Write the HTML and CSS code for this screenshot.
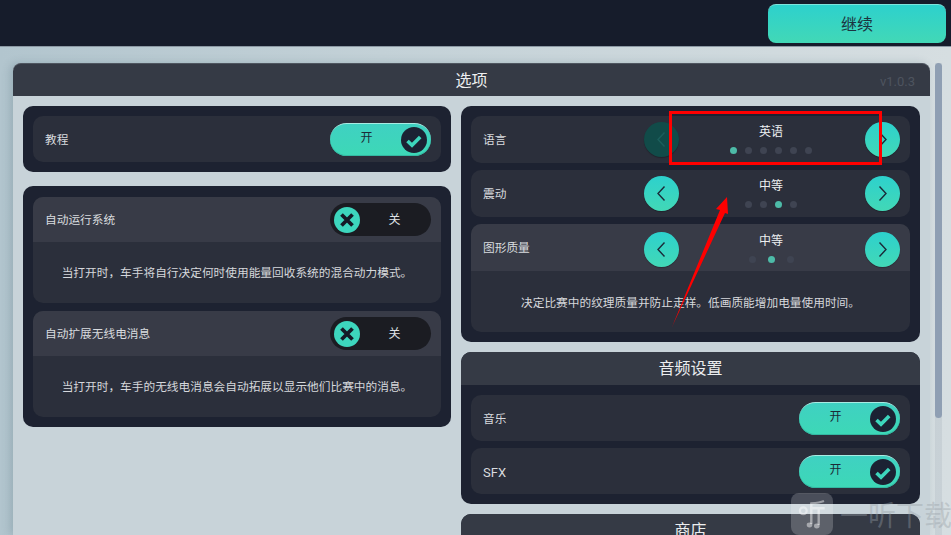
FILE: index.html
```html
<!DOCTYPE html>
<html lang="zh-CN">
<head>
    <meta charset="UTF-8">
    <meta name="viewport" content="width=device-width, initial-scale=1.0">
    <title>选项</title>
    <link rel="stylesheet" href="styles.css">
</head>
<body>
    <!-- Shared icons -->
    <svg class="icon-defs" width="0" height="0">
        <symbol id="icon-check" viewBox="0 0 26 26">
            <path d="M6.500 14l4.500 4.300 8.200-8.300" fill="none" stroke="currentColor" stroke-width="3.600"/>
        </symbol>
        <symbol id="icon-cross" viewBox="0 0 26 26">
            <path d="M7.500 7.500l11 11M18.500 7.500l-11 11" fill="none" stroke="currentColor" stroke-width="3.800"/>
        </symbol>
        <symbol id="icon-left" viewBox="0 0 35 35">
            <path d="M20.500 10.500l-6.500 7 6.500 7" fill="none" stroke="currentColor" stroke-width="1.400"/>
        </symbol>
        <symbol id="icon-right" viewBox="0 0 35 35">
            <path d="M14.500 10.500l6.500 7-6.500 7" fill="none" stroke="currentColor" stroke-width="1.400"/>
        </symbol>
    </svg>

    <!-- Top bar -->
    <div class="topbar">
        <button class="continue-btn">继续</button>
    </div>

    <div class="page">
        <div class="panel">
            <div class="panel-head">
                <span class="panel-title">选项</span>
                <span class="version">v1.0.3</span>
            </div>
            <div class="panel-body">
                <!-- Left column -->
                <div class="column column-left">
                    <div class="card">
                        <div class="row">
                            <span class="row-label">教程</span>
                            <div class="toggle on">
                                <span class="toggle-text">开</span>
                                <span class="knob"><svg><use href="#icon-check"/></svg></span>
                            </div>
                        </div>
                    </div>
                    <div class="card card-stack">
                        <div class="group">
                            <div class="row row-head">
                                <span class="row-label">自动运行系统</span>
                                <div class="toggle off">
                                    <span class="knob"><svg><use href="#icon-cross"/></svg></span>
                                    <span class="toggle-text">关</span>
                                </div>
                            </div>
                            <p class="desc">当打开时，车手将自行决定何时使用能量回收系统的混合动力模式。</p>
                        </div>
                        <div class="group">
                            <div class="row row-head">
                                <span class="row-label">自动扩展无线电消息</span>
                                <div class="toggle off">
                                    <span class="knob"><svg><use href="#icon-cross"/></svg></span>
                                    <span class="toggle-text">关</span>
                                </div>
                            </div>
                            <p class="desc">当打开时，车手的无线电消息会自动拓展以显示他们比赛中的消息。</p>
                        </div>
                    </div>
                </div>

                <!-- Right column -->
                <div class="column column-right">
                    <div class="card card-list">
                        <div class="row row-tall">
                            <span class="row-label">语言</span>
                            <div class="selector">
                                <button class="nav-btn disabled"><svg><use href="#icon-left"/></svg></button>
                                <div class="selector-value">
                                    <span>英语</span>
                                    <div class="dots">
                                        <i class="dot active"></i><i class="dot"></i><i class="dot"></i><i class="dot"></i><i class="dot"></i><i class="dot"></i>
                                    </div>
                                </div>
                                <button class="nav-btn"><svg><use href="#icon-right"/></svg></button>
                            </div>
                        </div>
                        <div class="row row-tall">
                            <span class="row-label">震动</span>
                            <div class="selector">
                                <button class="nav-btn"><svg><use href="#icon-left"/></svg></button>
                                <div class="selector-value">
                                    <span>中等</span>
                                    <div class="dots">
                                        <i class="dot"></i><i class="dot"></i><i class="dot active"></i><i class="dot"></i>
                                    </div>
                                </div>
                                <button class="nav-btn"><svg><use href="#icon-right"/></svg></button>
                            </div>
                        </div>
                        <div class="group">
                            <div class="row row-tall row-head">
                                <span class="row-label">图形质量</span>
                                <div class="selector">
                                    <button class="nav-btn"><svg><use href="#icon-left"/></svg></button>
                                    <div class="selector-value">
                                        <span>中等</span>
                                        <div class="dots dots-wide">
                                            <i class="dot"></i><i class="dot active"></i><i class="dot"></i>
                                        </div>
                                    </div>
                                    <button class="nav-btn"><svg><use href="#icon-right"/></svg></button>
                                </div>
                            </div>
                            <p class="desc desc-short">决定比赛中的纹理质量并防止走样。低画质能增加电量使用时间。</p>
                        </div>
                    </div>

                    <div class="card card-titled">
                        <h2 class="card-title">音频设置</h2>
                        <div class="card-list">
                            <div class="row">
                                <span class="row-label">音乐</span>
                                <div class="toggle on">
                                    <span class="toggle-text">开</span>
                                    <span class="knob"><svg><use href="#icon-check"/></svg></span>
                                </div>
                            </div>
                            <div class="row">
                                <span class="row-label row-label-latin">SFX</span>
                                <div class="toggle on">
                                    <span class="toggle-text">开</span>
                                    <span class="knob"><svg><use href="#icon-check"/></svg></span>
                                </div>
                            </div>
                        </div>
                    </div>

                    <div class="card card-titled">
                        <h2 class="card-title">商店</h2>
                    </div>
                </div>
            </div>
        </div>

        <div class="scrollbar"><div class="scroll-thumb"></div></div>
    </div>

    <!-- Annotations drawn over the screenshot -->
    <div class="mark-box"></div>
    <svg class="mark-arrow" viewBox="0 0 951 535">
        <polygon points="727,197 716,209 720,210 672,327 725,213 728,214" fill="#ff0000"/>
    </svg>

    <!-- Watermark -->
    <div class="watermark">
        <svg class="watermark-icon" viewBox="0 0 42 42">
            <rect width="42" height="42" rx="8" fill="#ffffff" fill-opacity="0.2"/>
            <g fill="none" stroke="#ffffff" stroke-opacity="0.45">
                <circle cx="12.300" cy="17.700" r="3.400" stroke-width="2.200"/>
                <path d="M33 8c-4 1.500-8 2-12.700 2.500V31M19 15.300h14.700M27.700 15.300V32" stroke-width="2.400"/>
            </g>
            <g fill="#ffffff" fill-opacity="0.45">
                <ellipse cx="18.500" cy="32" rx="2.800" ry="2.400"/>
                <ellipse cx="25.800" cy="33" rx="2.800" ry="2.400"/>
            </g>
        </svg>
        <span class="watermark-text">一听下载</span>
    </div>
</body>
</html>
```

FILE: styles.css
```css
/* General body styling */
html, body {
    height: 535px;
}

body {
    margin: 0;
    overflow: hidden;
    position: relative;
    font-family: 'Noto Sans CJK SC', 'Noto Sans', sans-serif;
    color: #e4e6ea;
    background: #c8d3d9;
}

.icon-defs {
    position: absolute;
}

/* Top bar */
.topbar {
    height: 42px;
    background: #161c2b;
    border-bottom: 1px solid #8b98a3;
    display: flex;
    justify-content: flex-end;
    padding: 4px 5px 0 0;
}

.continue-btn {
    width: 178px;
    height: 39px;
    border: none;
    border-top: 1px solid #7de4dc;
    border-radius: 8px;
    background: linear-gradient(180deg, #2dd1cd, #42d8b6);
    color: #1c3440;
    font-family: inherit;
    font-size: 16px;
    padding: 0 0 3px;
}

/* Page area under the bar */
.page {
    height: 488px;
    display: flex;
    padding-top: 16px;
    box-sizing: border-box;
    background: linear-gradient(90deg, #b2c5ce 0, #c3d1d7 40%, #d6dee1 100%);
}

.panel {
    width: 917px;
    margin-left: 13px;
    flex-shrink: 0;
    background: #c8d3d9;
    border-radius: 8px 8px 0 0;
    box-shadow: -3px 0 8px rgba(60, 90, 105, 0.22);
}

.panel-head {
    height: 33px;
    background: #353a45;
    border-top: 1px solid #4f5660;
    box-sizing: border-box;
    border-radius: 8px 8px 0 0;
    display: flex;
    align-items: center;
    justify-content: center;
    position: relative;
    font-size: 16px;
    color: #eceef0;
}

.panel-title {
    padding-bottom: 3px;
}

.version {
    position: absolute;
    right: 15px;
    top: 9px;
    font-family: 'Roboto', sans-serif;
    font-size: 13px;
    line-height: 18px;
    color: #4e545f;
}

.panel-body {
    display: grid;
    grid-template-columns: 428px 459px;
    gap: 10px;
    padding: 10px;
}

.column-left {
    display: flex;
    flex-direction: column;
    gap: 14px;
}

.column-right {
    display: flex;
    flex-direction: column;
    gap: 10px;
}

/* Cards and rows */
.card {
    background: #1d2231;
    border-radius: 10px;
    padding: 10px;
}

.card-stack {
    display: flex;
    flex-direction: column;
    gap: 8px;
    padding-top: 11px;
}

.card-stack .row-head {
    height: 45px;
}

.card-stack .desc {
    height: 61px;
    padding-bottom: 2px;
    box-sizing: border-box;
}

.card-list {
    display: flex;
    flex-direction: column;
    gap: 7px;
}

.card-titled {
    padding: 0 0 10px;
    overflow: hidden;
}

.card-titled .card-list {
    padding: 10px 10px 0;
}

.card-title {
    margin: 0;
    height: 33px;
    line-height: 31px;
    background: #353a45;
    text-align: center;
    font-size: 16px;
    font-weight: 400;
    color: #eceef0;
}

.row {
    height: 46px;
    box-sizing: border-box;
    padding: 0 10px 0 12px;
    display: flex;
    align-items: center;
    justify-content: space-between;
    background: #2b2f3b;
    border-radius: 10px;
}

.row-tall {
    height: 47px;
}

.row-label {
    font-size: 11.700px;
    color: #d9dbdf;
    padding-bottom: 2px;
}

.row-label-latin {
    font-family: 'Roboto', sans-serif;
    font-size: 13px;
    padding: 3px 0 0;
}

.group {
    background: #2b2f3b;
    border-radius: 10px;
    overflow: hidden;
}

.row-head {
    background: #383b47;
    border-radius: 0;
}

.row-head .selector {
    margin-top: 3px;
}

.desc {
    margin: 0;
    height: 60px;
    display: flex;
    align-items: center;
    justify-content: center;
    font-size: 11.700px;
    color: #d6d8dc;
}

.desc-short {
    height: 61px;
}

/* Toggle */
.toggle {
    width: 101px;
    height: 33px;
    box-sizing: border-box;
    border-radius: 17px;
    padding: 0 4px;
    display: flex;
    align-items: center;
}

.toggle.on {
    background: linear-gradient(180deg, #3fd1c2, #3dd8b6);
    border-top: 1px solid #a8ece3;
    box-shadow: inset 0 -1px 0 #33b8a2;
    color: #1c2c38;
}

.toggle.off {
    background: #1b1c22;
    color: #dfe1e5;
}

.toggle-text {
    flex: 1;
    text-align: center;
    font-size: 12px;
    padding-bottom: 3px;
}

.toggle.on .toggle-text {
    padding: 0 2px 6px 0;
}

.toggle.off .toggle-text {
    padding-left: 2px;
}

.knob {
    width: 26px;
    height: 26px;
    border-radius: 50%;
    flex-shrink: 0;
}

.knob svg {
    display: block;
    width: 26px;
    height: 26px;
}

.toggle.on .knob {
    background: #1b2233;
    color: #3dd6bd;
}

.toggle.off .knob {
    background: #3dd6bd;
    color: #151a26;
}

/* Option selector */
.selector {
    width: 256px;
    display: flex;
    align-items: center;
    justify-content: space-between;
}

.nav-btn {
    width: 35px;
    height: 35px;
    padding: 0;
    border: none;
    border-radius: 50%;
    background: linear-gradient(180deg, #2dd1cd, #42d8b6);
    color: #1b2a38;
    box-shadow: 0 1px 1px rgba(0, 0, 0, 0.25);
}

.nav-btn svg {
    display: block;
    width: 35px;
    height: 35px;
}

.nav-btn.disabled {
    background: #114b49;
    color: #1b5f5c;
}

.selector-value {
    display: flex;
    flex-direction: column;
    align-items: center;
    gap: 8px;
    padding-bottom: 4px;
    margin-right: 2px;
    font-size: 12px;
    color: #eceef0;
}

.dots {
    display: flex;
    gap: 8px;
}

.dots-wide {
    gap: 12px;
}

.dot {
    display: block;
    width: 7px;
    height: 7px;
    border-radius: 50%;
    background: #3f4452;
}

.dot.active {
    background: #4dbba8;
}

/* Scrollbar */
.scrollbar {
    width: 7px;
    margin-left: 5px;
    flex-shrink: 0;
    background: rgba(140, 150, 165, 0.18);
}

.scroll-thumb {
    height: 355px;
    background: #8f9fb3;
    border-radius: 4px;
}

/* Annotations */
.mark-box {
    position: absolute;
    left: 669px;
    top: 111px;
    width: 213px;
    height: 54px;
    box-sizing: border-box;
    border: 3px solid #ff0000;
}

.mark-arrow {
    position: absolute;
    left: 0;
    top: 0;
    width: 951px;
    height: 535px;
    pointer-events: none;
}

/* Watermark */
.watermark {
    position: absolute;
    left: 791px;
    top: 493px;
    display: flex;
    gap: 7px;
    height: 42px;
}

.watermark-icon {
    width: 42px;
    height: 42px;
}

.watermark-text {
    font-size: 28px;
    line-height: 42px;
    white-space: nowrap;
    color: rgba(150, 158, 165, 0.38);
}
```
